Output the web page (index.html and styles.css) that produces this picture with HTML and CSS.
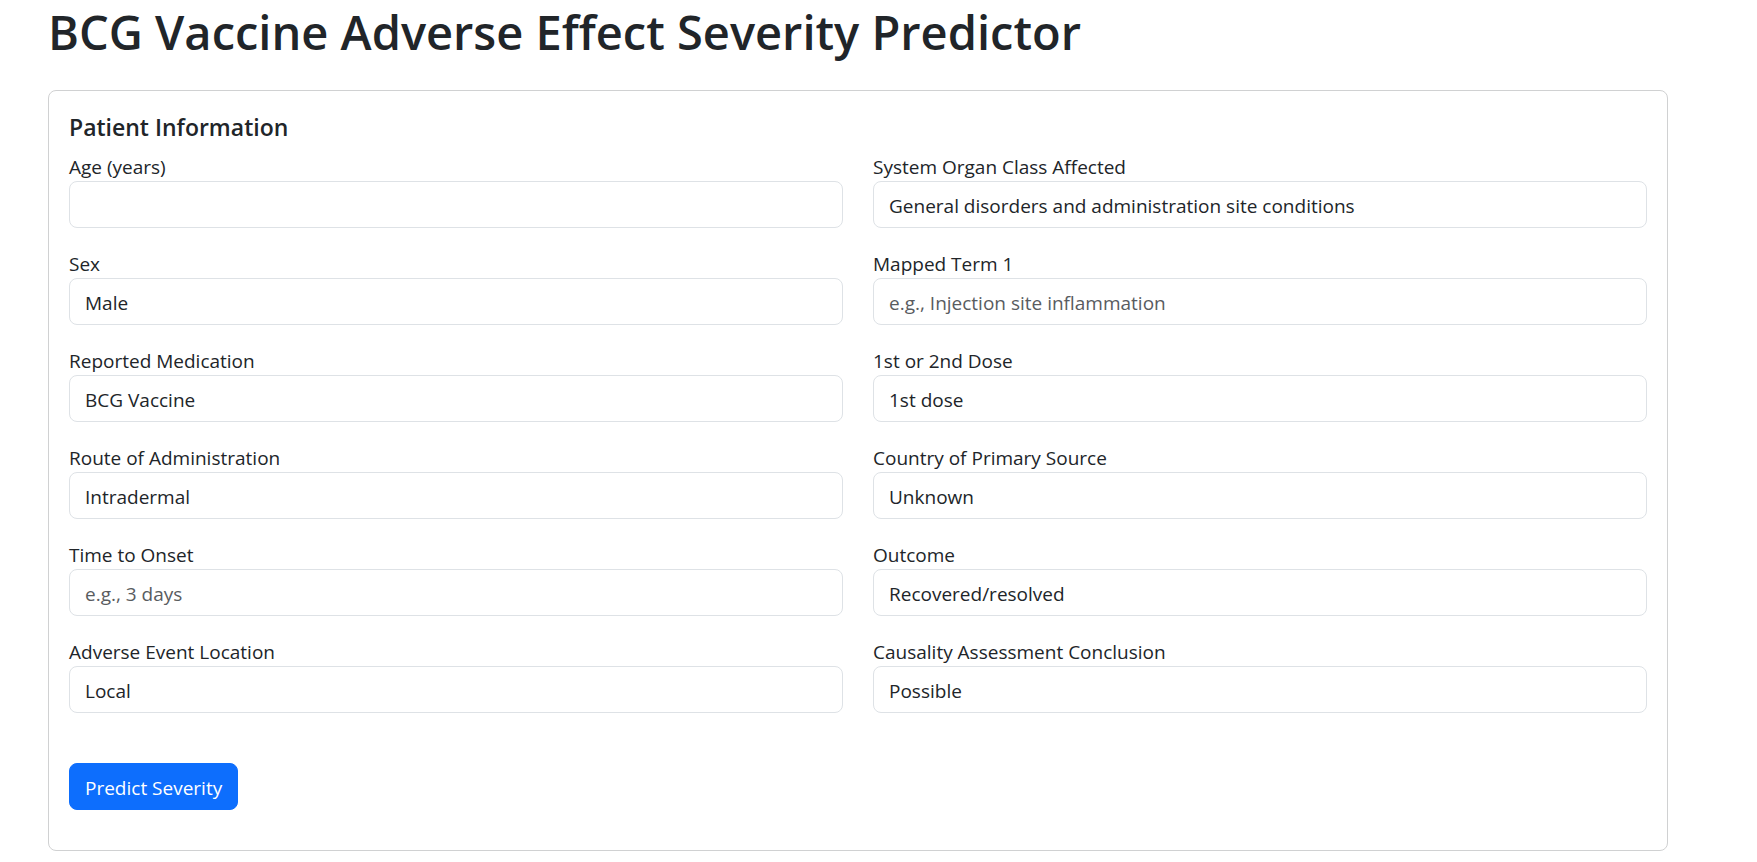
FILE: index.html
```html
<!DOCTYPE html>
<html lang="en">
<head>
<meta charset="utf-8">
<meta name="viewport" content="width=device-width, initial-scale=1">
<title>BCG Vaccine Adverse Effect Severity Predictor</title>
<link rel="stylesheet" href="styles.css">
</head>
<body>
<main class="container">
  <h1 class="page-title">BCG Vaccine Adverse Effect Severity Predictor</h1>
  <form class="card">
    <h2 class="card-title">Patient Information</h2>
    <div class="row">
      <div class="col">
        <div class="field">
          <label class="label" for="age">Age (years)</label>
          <input class="control" id="age" type="text" inputmode="numeric">
        </div>
        <div class="field">
          <label class="label" for="sex">Sex</label>
          <select class="control" id="sex"><option>Male</option><option>Female</option></select>
        </div>
        <div class="field">
          <label class="label" for="medication">Reported Medication</label>
          <input class="control" id="medication" type="text" value="BCG Vaccine">
        </div>
        <div class="field">
          <label class="label" for="route">Route of Administration</label>
          <select class="control" id="route"><option>Intradermal</option></select>
        </div>
        <div class="field">
          <label class="label" for="onset">Time to Onset</label>
          <input class="control" id="onset" type="text" placeholder="e.g., 3 days">
        </div>
        <div class="field">
          <label class="label" for="location">Adverse Event Location</label>
          <select class="control" id="location"><option>Local</option></select>
        </div>
      </div>
      <div class="col">
        <div class="field">
          <label class="label" for="organ">System Organ Class Affected</label>
          <select class="control" id="organ"><option>General disorders and administration site conditions</option></select>
        </div>
        <div class="field">
          <label class="label" for="term">Mapped Term 1</label>
          <input class="control" id="term" type="text" placeholder="e.g., Injection site inflammation">
        </div>
        <div class="field">
          <label class="label" for="dose">1st or 2nd Dose</label>
          <select class="control" id="dose"><option>1st dose</option><option>2nd dose</option></select>
        </div>
        <div class="field">
          <label class="label" for="country">Country of Primary Source</label>
          <input class="control" id="country" type="text" value="Unknown">
        </div>
        <div class="field">
          <label class="label" for="outcome">Outcome</label>
          <select class="control" id="outcome"><option>Recovered/resolved</option></select>
        </div>
        <div class="field">
          <label class="label" for="causality">Causality Assessment Conclusion</label>
          <select class="control" id="causality"><option>Possible</option></select>
        </div>
      </div>
    </div>
    <button class="btn" type="submit">Predict Severity</button>
  </form>
</main>
</body>
</html>
```
FILE: styles.css
```css
*, *::before, *::after {
  box-sizing: border-box;
}

body {
  margin: 0;
  background: #fff;
  color: #212529;
  font-family: "Segoe UI", "Open Sans", "Noto Sans", sans-serif;
  font-size: 19px;
  line-height: 30px;
}

.container {
  padding: 0 89px 11px 48px;
}

.page-title {
  margin: 0 0 26px;
  font-size: 47px;
  font-weight: 600;
  line-height: 64px;
}

.card {
  padding: 20px 20px 40px;
  border: 1px solid #d0d1d2;
  border-radius: 8px;
}

.card-title {
  margin: 0 0 8px;
  font-size: 23px;
  font-weight: 600;
  line-height: 32px;
}

.row {
  display: grid;
  grid-template-columns: 1fr 1fr;
  gap: 30px;
}

.col {
  display: flex;
  flex-direction: column;
  gap: 20px;
}

.field {
  display: flex;
  flex-direction: column;
}

.label {
  padding-top: 2px;
  line-height: 28px;
}

.control {
  width: 100%;
  margin: 0;
  padding: 9px 15px 6px;
  border: 1px solid #dee2e6;
  border-radius: 8px;
  background: #fff;
  color: inherit;
  font: inherit;
  appearance: none;
}

.control::placeholder {
  color: #595c5f;
  opacity: 1;
}

.btn {
  margin-top: 50px;
  padding: 9px 15px 6px;
  border: 1px solid #0d6efd;
  border-radius: 8px;
  background: #0d6efd;
  color: #fff;
  font: inherit;
}
```
